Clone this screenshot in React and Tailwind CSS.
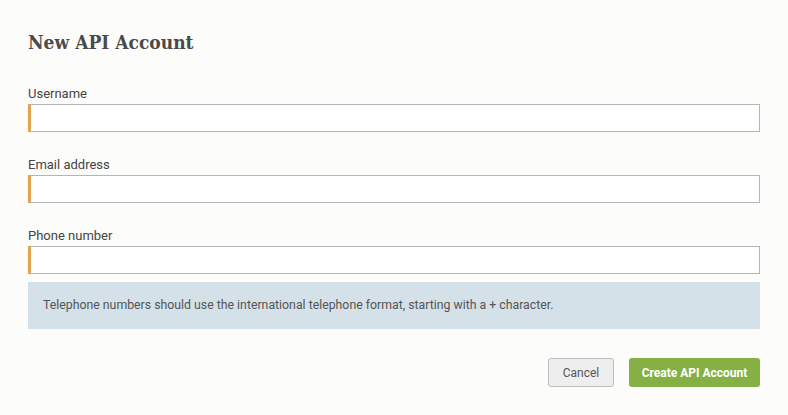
import React from "react";

function Field({ label }) {
  return (
    <div className="flex flex-col">
      <label className="text-[13px] leading-[16px] text-[#444] mb-[2px]">{label}</label>
      <input
        type="text"
        className="h-[28px] w-full bg-white border border-[#b5b5b5] border-l-[3px] border-l-[#e3a24b] outline-none"
      />
    </div>
  );
}

export default function App() {
  return (
    <div
      className="w-[788px] h-[415px] bg-[#fcfcfa] px-[28px] pt-[29px]"
      style={{ fontFamily: "Roboto, 'Liberation Sans', sans-serif" }}
    >
      <h1
        className="text-[19px] leading-[26px] font-bold text-[#4a4a4a] m-0 font-stretch-condensed"
        style={{ fontFamily: "'DejaVu Serif Condensed', 'DejaVu Serif', 'Liberation Serif', serif" }}
      >
        New API Account
      </h1>
      <div className="mt-[31px] flex flex-col gap-[25px]">
        <Field label="Username" />
        <Field label="Email address" />
        <Field label="Phone number" />
      </div>
      <div className="mt-[8px] h-[47px] bg-[#d4e1e8] flex items-center px-[15px] text-[12.3px] text-[#555]">
        Telephone numbers should use the international telephone format, starting with a + character.
      </div>
      <div className="mt-[29px] flex justify-end gap-[15px]">
        <button className="h-[29px] w-[66px] rounded-[3px] border border-[#bdbdbd] bg-[#eeeeee] text-[12px] text-[#555]">
          Cancel
        </button>
        <button className="h-[29px] w-[131px] rounded-[3px] bg-[#85b043] text-[12px] font-bold text-white">
          Create API Account
        </button>
      </div>
    </div>
  );
}
